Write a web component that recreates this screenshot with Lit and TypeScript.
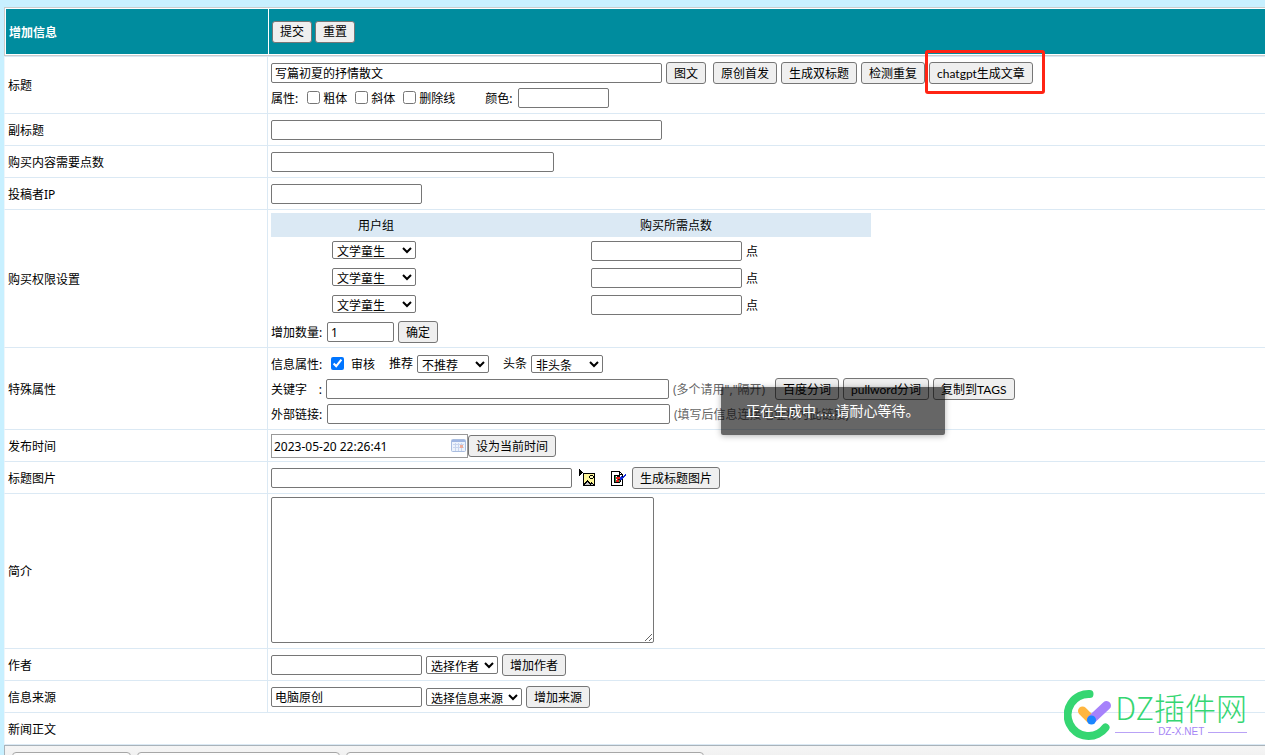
import { LitElement, html, css, svg } from "lit";
import { customElement, state } from "lit/decorators.js";

@customElement("app-root")
export class AppRoot extends LitElement {
  @state() private rows = [1, 2, 3];

  static styles = css`
    :host {
      display: block;
      position: relative;
      box-sizing: border-box;
      height: 100vh;
      overflow: hidden;
      padding: 7px 0 0 4px;
      background: #c8f0ff;
      color: #000;
      font: 12px/16px "Noto Sans", "Noto Sans CJK SC", sans-serif;
    }
    * { box-sizing: border-box; }
    form { margin: 0; background: #fff; }
    .head, .row { display: grid; grid-template-columns: 263px 1fr; }
    .head {
      height: 49px;
      border: 1px solid #ccc;
      border-right: 0;
      padding: 1px 0 1px 1px;
      background: #fff;
    }
    .head > * { background: #008c9e; display: flex; align-items: center; gap: 3px; }
    .head .title { margin: 0 1px 0 0; padding: 2px 0 0 3px; color: #fff; font-size: 12px; font-weight: 700; }
    .head .actions { padding-left: 3px; }
    .row { border-bottom: 1px solid #dbe9f4; border-left: 1px solid #eef6fb; min-height: 32px; }
    .first { border-top: 1px solid #dbe9f4; }
    .name { display: flex; align-items: center; padding: 2px 3px 0; border-right: 1px solid #dbe9f4; }
    .wide { grid-template-columns: 1fr; }
    .wide .name { border-right: 0; }
    .cell { padding: 5px 3px 4px; display: flex; flex-direction: column; align-items: flex-start; justify-content: center; gap: 3px; }
    .groups { padding: 3px 3px 4px; }
    .special { padding-top: 5px; }
    .tight { padding: 4px 3px 3px; }
    .area { padding: 3px 3px 5px; }
    .line { display: flex; align-items: center; height: 22px; gap: 4px; white-space: nowrap; }
    .line.tall { height: 24px; gap: 0; }
    .num, .colon, .hint, .prefix, .color, .checks, .audit { padding-top: 2px; }
    .colon { display: flex; width: 51px; justify-content: space-between; }
    .attrs label { display: flex; align-items: center; }
    .attrs .color { margin-left: 26px; width: 29px; }
    .checks { display: flex; gap: 8px; padding-left: 5px; }
    .checks label { gap: 3px; }
    .pick { display: flex; align-items: center; gap: 4px; margin-left: 10px; }
    .audit { display: flex; align-items: center; gap: 7px; padding-left: 4px; }
    .num { width: 52px; }
    input, select, button, textarea { font: inherit; color: #000; margin: 0; }
    input[type="text"], textarea {
      border: 1px solid #767676;
      border-radius: 2px;
      background: #fff;
      height: 20px;
      padding: 1px 3px;
      outline: 0;
      flex: none;
    }
    input[type="checkbox"] { width: 13px; height: 13px; flex: none; margin-bottom: 4px; }
    textarea { display: block; width: 383px; height: 146px; }
    select { height: 18px; border: 1px solid #767676; border-radius: 2px; background-color: #fff; padding: 0; }
    button {
      height: 22px;
      padding: 1px 7px 0;
      border: 1px solid #767676;
      border-radius: 3px;
      background: #efefef;
      white-space: nowrap;
      font-family: Lato, "Noto Sans CJK SC", sans-serif;
      line-height: 18px;
      flex: none;
    }
    input.w391 { width: 391px; }
    input.w283 { width: 283px; }
    input.w151 { width: 151px; }
    input.w91 { width: 91px; }
    input.w67 { width: 67px; }
    input.w343 { width: 343px; }
    input.w301 { width: 301px; }
    select.w84 { width: 84px; }
    select.w72 { width: 72px; }
    select.w96 { width: 96px; }
    .tools { display: flex; gap: 4px; margin-left: 3px; }
    .marked { position: relative; display: flex; }
    .marked::after {
      content: "";
      position: absolute;
      inset: -12px -12px -10px -4px;
      border: 3px solid #ff2414;
      border-radius: 3px;
      pointer-events: none;
    }
    .hint { color: #666; width: 98px; }
    .date { position: relative; display: flex; }
    .date input[type="text"] { width: 197px; height: 24px; border-color: #999; border-radius: 0; padding: 0 2px; }
    .date svg { position: absolute; right: 2px; top: 5px; }
    .icons { display: flex; align-items: center; gap: 14px; padding: 0 1px 0 2px; }
    .icons a { display: flex; }
    table { width: 600px; border-collapse: collapse; }
    th { background: #dbe9f4; font-weight: 400; height: 24px; padding: 1px 0 0; }
    td { height: 27px; padding: 0; text-align: center; }
    td:first-child { padding-right: 4px; }
    td:last-child { padding-right: 3px; }
    .points { display: flex; justify-content: center; align-items: center; gap: 4px; }
    .points label { padding-top: 2px; }
    .g1 { width: 35%; }
    .editor {
      border: 1px solid #a9b3ba;
      border-width: 1px 0 0 1px;
      background: linear-gradient(#f5f5f5, #e9e9e9 30px);
      height: 40px;
      display: flex;
      gap: 6px;
      padding: 6px 7px;
    }
    .group { border: 1px solid #a6a6a6; border-radius: 4px; height: 28px; background: #fcfcfc; }
    .ga { width: 119px; }
    .gb { width: 203px; }
    .gc { width: 358px; }
    .toast {
      position: absolute;
      left: 57%;
      top: 387px;
      padding: 12px 25px;
      border-radius: 2px;
      background: rgba(0, 0, 0, 0.6);
      box-shadow: 0 1px 6px rgba(0, 0, 0, 0.3);
      color: #fff;
      font: 14px/24px "Liberation Sans", "Noto Sans CJK SC", sans-serif;
      white-space: nowrap;
    }
    .brand { position: absolute; right: 18px; top: 688px; display: flex; gap: 2px; color: #35d672; }
    .words { display: flex; flex-direction: column; }
    .big { font: 300 31px/38px "Noto Sans CJK SC", sans-serif; }
    .small { display: flex; align-items: center; gap: 4px; color: #a585f5; font: 10px/12px "Liberation Sans", sans-serif; }
    .small::before, .small::after { content: ""; height: 1px; background: #b9a2f6; flex: 1; }
  `;

  private calendar = svg`<svg width="15" height="14" viewBox="0 0 15 14">
    <rect x="0.5" y="0.5" width="14" height="12" rx="1" fill="#edf3fc" stroke="#a9bde0"/>
    <path d="M1 1h13v2H1z" fill="#9eb5e2"/>
    <path d="M2 5.500h11M2 8.500h11M4.500 4v8M7.500 4v8M10.500 4v8" stroke="#c8d5ee"/>
    <path d="M9 6h3v3H9z" fill="#efad9c"/></svg>`;

  private picture = svg`<svg width="18" height="18" viewBox="0 0 18 18" shape-rendering="crispEdges">
    <path d="M1 0h1v1h1v1h1v1h1v1H4v1H3v1H2v1H1z" fill="#000"/>
    <path d="M5 4h12v13H5z" fill="#000"/><path d="M6 5h10v11H6z" fill="#fff79a"/>
    <path d="M12 6h3v1h1v2h-1v1h-3V9h-1V7h1z" fill="#000"/><path d="M12 7h3v2h-3z" fill="#fffbc0"/>
    <path d="M6 14h1v-1h1v-1h1v-1h1v1h1v1h1v1h1v-1h1v1h1v1h1v1H6z" fill="#000"/>
    <path d="M8 14h1v-1h1v1h1v1h1v1H7v-1h1zM13 15h2v1h-2z" fill="#c4c4c4"/></svg>`;

  private edit = svg`<svg width="17" height="17" viewBox="0 0 17 17" shape-rendering="crispEdges">
    <path d="M1.500 1.500h8l3 3v11h-11z" fill="#fff" stroke="#000"/>
    <path d="M9 1h1v3h3v1H9z" fill="#000"/>
    <path d="M4 5h6v1H4zM4 5h1v8H4zM4 12h6v1H4zM10 9h1v3h-1z" fill="#000"/>
    <path d="M5 6h1v6H5zM9 10h1v2H9z" fill="#1c9a4c"/>
    <path d="M6 7h4v2H6zM7 9h1v1H7zM6 10h3v2H6z" fill="#e82020"/>
    <path d="M7 6h3v1H7zM8 9h2v1H8z" fill="#111"/>
    <path d="M10 9V7h1V6h1v1h1V6h1V5h1V4h1v2h-1v1h-1v1h-1v1h-1v1h-2z" fill="#102ad8"/></svg>`;

  private logo = svg`<svg width="49" height="52" viewBox="0 0 49 52" fill="none" stroke-linecap="round">
    <path d="M25.500 6A21 21 0 1 0 41.500 39.500" stroke="#35d672" stroke-width="8"/>
    <path d="M18.500 23l8.500 8.500" stroke="#ffb63f" stroke-width="9"/>
    <path d="M42.500 17.500L27.500 31.500" stroke="#a682fb" stroke-width="9"/>
    <circle cx="27.500" cy="32" r="4.500" fill="#1a86ff"/></svg>`;

  private text(id: string, width: string, value = "") {
    return html`<input type="text" id=${id} class=${width} .value=${value}>`;
  }

  private btn(label: string) {
    return html`<button type="button">${label}</button>`;
  }

  render() {
    return html`
      <form @submit=${(e: Event) => e.preventDefault()}>
        <div class="head">
          <h1 class="title">增加信息</h1>
          <div class="actions">${this.btn("提交")}<button type="reset">重置</button></div>
        </div>

        <div class="row first">
          <div class="name"><label for="title">标题</label></div>
          <div class="cell">
            <div class="line">
              ${this.text("title", "w391", "写篇初夏的抒情散文")}
              ${this.btn("图文")}
              <div class="tools">
                ${this.btn("原创首发")}${this.btn("生成双标题")}${this.btn("检测重复")}
                <span class="marked">${this.btn("chatgpt生成文章")}</span>
              </div>
            </div>
            <div class="line attrs">
              <span class="prefix">属性:</span>
              <div class="checks">
                <label><input type="checkbox">粗体</label>
                <label><input type="checkbox">斜体</label>
                <label><input type="checkbox">删除线</label>
              </div>
              <label class="color" for="color">颜色:</label>${this.text("color", "w91")}
            </div>
          </div>
        </div>

        <div class="row">
          <div class="name"><label for="subtitle">副标题</label></div>
          <div class="cell"><div class="line">${this.text("subtitle", "w391")}</div></div>
        </div>
        <div class="row">
          <div class="name"><label for="cost">购买内容需要点数</label></div>
          <div class="cell"><div class="line">${this.text("cost", "w283")}</div></div>
        </div>
        <div class="row">
          <div class="name"><label for="ip">投稿者IP</label></div>
          <div class="cell"><div class="line">${this.text("ip", "w151")}</div></div>
        </div>

        <div class="row">
          <div class="name">购买权限设置</div>
          <div class="cell groups">
            <table>
              <thead><tr><th class="g1">用户组</th><th>购买所需点数</th></tr></thead>
              <tbody>
                ${this.rows.map((n) => html`<tr>
                  <td><select class="w84" aria-label="用户组"><option>文学童生</option></select></td>
                  <td><div class="points">${this.text("points" + n, "w151")}<label for=${"points" + n}>点</label></div></td>
                </tr>`)}
              </tbody>
            </table>
            <div class="line"><label class="num" for="count">增加数量:</label>${this.text("count", "w67", "1")}${this.btn("确定")}</div>
          </div>
        </div>

        <div class="row">
          <div class="name">特殊属性</div>
          <div class="cell special">
            <div class="line">
              <span class="num">信息属性:</span>
              <label class="audit"><input type="checkbox" checked>审核</label>
              <label class="pick">推荐<select class="w72"><option>不推荐</option></select></label>
              <label class="pick">头条<select class="w72"><option>非头条</option></select></label>
            </div>
            <div class="line">
              <label class="colon" for="keys"><span>关键字</span><span>:</span></label>${this.text("keys", "w343")}
              <span class="hint">(多个请用","隔开)</span>
              ${this.btn("百度分词")}${this.btn("pullword分词")}${this.btn("复制到TAGS")}
            </div>
            <div class="line">
              <label class="num" for="link">外部链接:</label>${this.text("link", "w343")}
              <span class="hint">(填写后信息连接地址将为此链接)</span>
            </div>
          </div>
        </div>

        <div class="row">
          <div class="name"><label for="time">发布时间</label></div>
          <div class="cell tight">
            <div class="line tall">
              <span class="date">${this.text("time", "", "2023-05-20 22:26:41")}${this.calendar}</span>
              ${this.btn("设为当前时间")}
            </div>
          </div>
        </div>
        <div class="row">
          <div class="name"><label for="pic">标题图片</label></div>
          <div class="cell"><div class="line">
            ${this.text("pic", "w301")}
            <span class="icons">
              <a href="#" aria-label="上传图片">${this.picture}</a>
              <a href="#" aria-label="编辑图片">${this.edit}</a>
            </span>
            ${this.btn("生成标题图片")}
          </div></div>
        </div>
        <div class="row">
          <div class="name"><label for="intro">简介</label></div>
          <div class="cell area"><textarea id="intro"></textarea></div>
        </div>
        <div class="row">
          <div class="name"><label for="author">作者</label></div>
          <div class="cell"><div class="line">
            ${this.text("author", "w151")}
            <select class="w72" aria-label="作者"><option>选择作者</option></select>
            ${this.btn("增加作者")}
          </div></div>
        </div>
        <div class="row">
          <div class="name"><label for="source">信息来源</label></div>
          <div class="cell"><div class="line">
            ${this.text("source", "w151", "电脑原创")}
            <select class="w96" aria-label="信息来源"><option>选择信息来源</option></select>
            ${this.btn("增加来源")}
          </div></div>
        </div>
        <div class="row wide"><div class="name">新闻正文</div></div>
        <div class="editor">
          <div class="group ga"></div><div class="group gb"></div><div class="group gc"></div>
        </div>
      </form>

      <div class="toast" role="status">正在生成中.....请耐心等待。</div>
      <div class="brand">
        ${this.logo}
        <div class="words"><span class="big">DZ插件网</span><span class="small">DZ-X.NET</span></div>
      </div>
    `;
  }
}
